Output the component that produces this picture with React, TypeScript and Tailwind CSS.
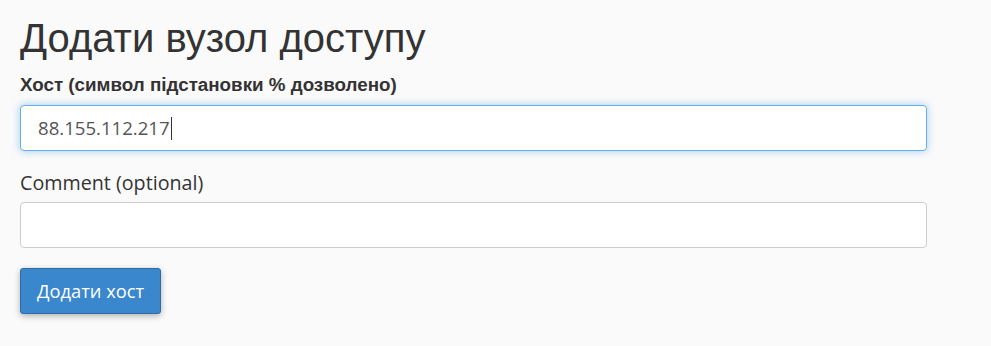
import React from "react";

export default function App() {
  return (
    <div className="min-h-[346px] w-full bg-[#fafafa] px-5 pt-[14px]">
      <h1 className="font-['Liberation_Sans',Arial,sans-serif] text-[40px] leading-[48px] text-[#333]">
        Додати вузол доступу
      </h1>
      <div className="mt-[13px] font-['Liberation_Sans',Arial,sans-serif] text-[18.8px] font-bold leading-[20px] text-[#333]">
        Хост (символ підстановки % дозволено)
      </div>
      <div className="mt-[10px] flex h-[46px] w-[907px] items-center rounded-[4px] border border-[#66afe9] bg-white pl-[17px] shadow-[0_0_8px_rgba(102,175,233,0.6)]">
        <span className="font-['Open_Sans',sans-serif] text-[18.6px] text-[#555]">88.155.112.217</span>
        <span className="ml-[1px] h-[23px] w-[1px] bg-[#333]" />
      </div>
      <div className="mt-[19px] font-['Open_Sans',sans-serif] text-[19.7px] leading-[26px] text-[#333]">
        Comment (optional)
      </div>
      <div className="mt-[6px] h-[46px] w-[907px] rounded-[4px] border border-[#ccc] bg-white" />
      <button className="mt-[20px] flex h-[46px] items-center rounded-[3px] border border-[#2e6da4] bg-[#3a87ce] px-[16px] font-['Open_Sans',sans-serif] text-[18.3px] text-white shadow-[0_2px_6px_rgba(0,0,0,0.3)]">
        Додати хост
      </button>
    </div>
  );
}
